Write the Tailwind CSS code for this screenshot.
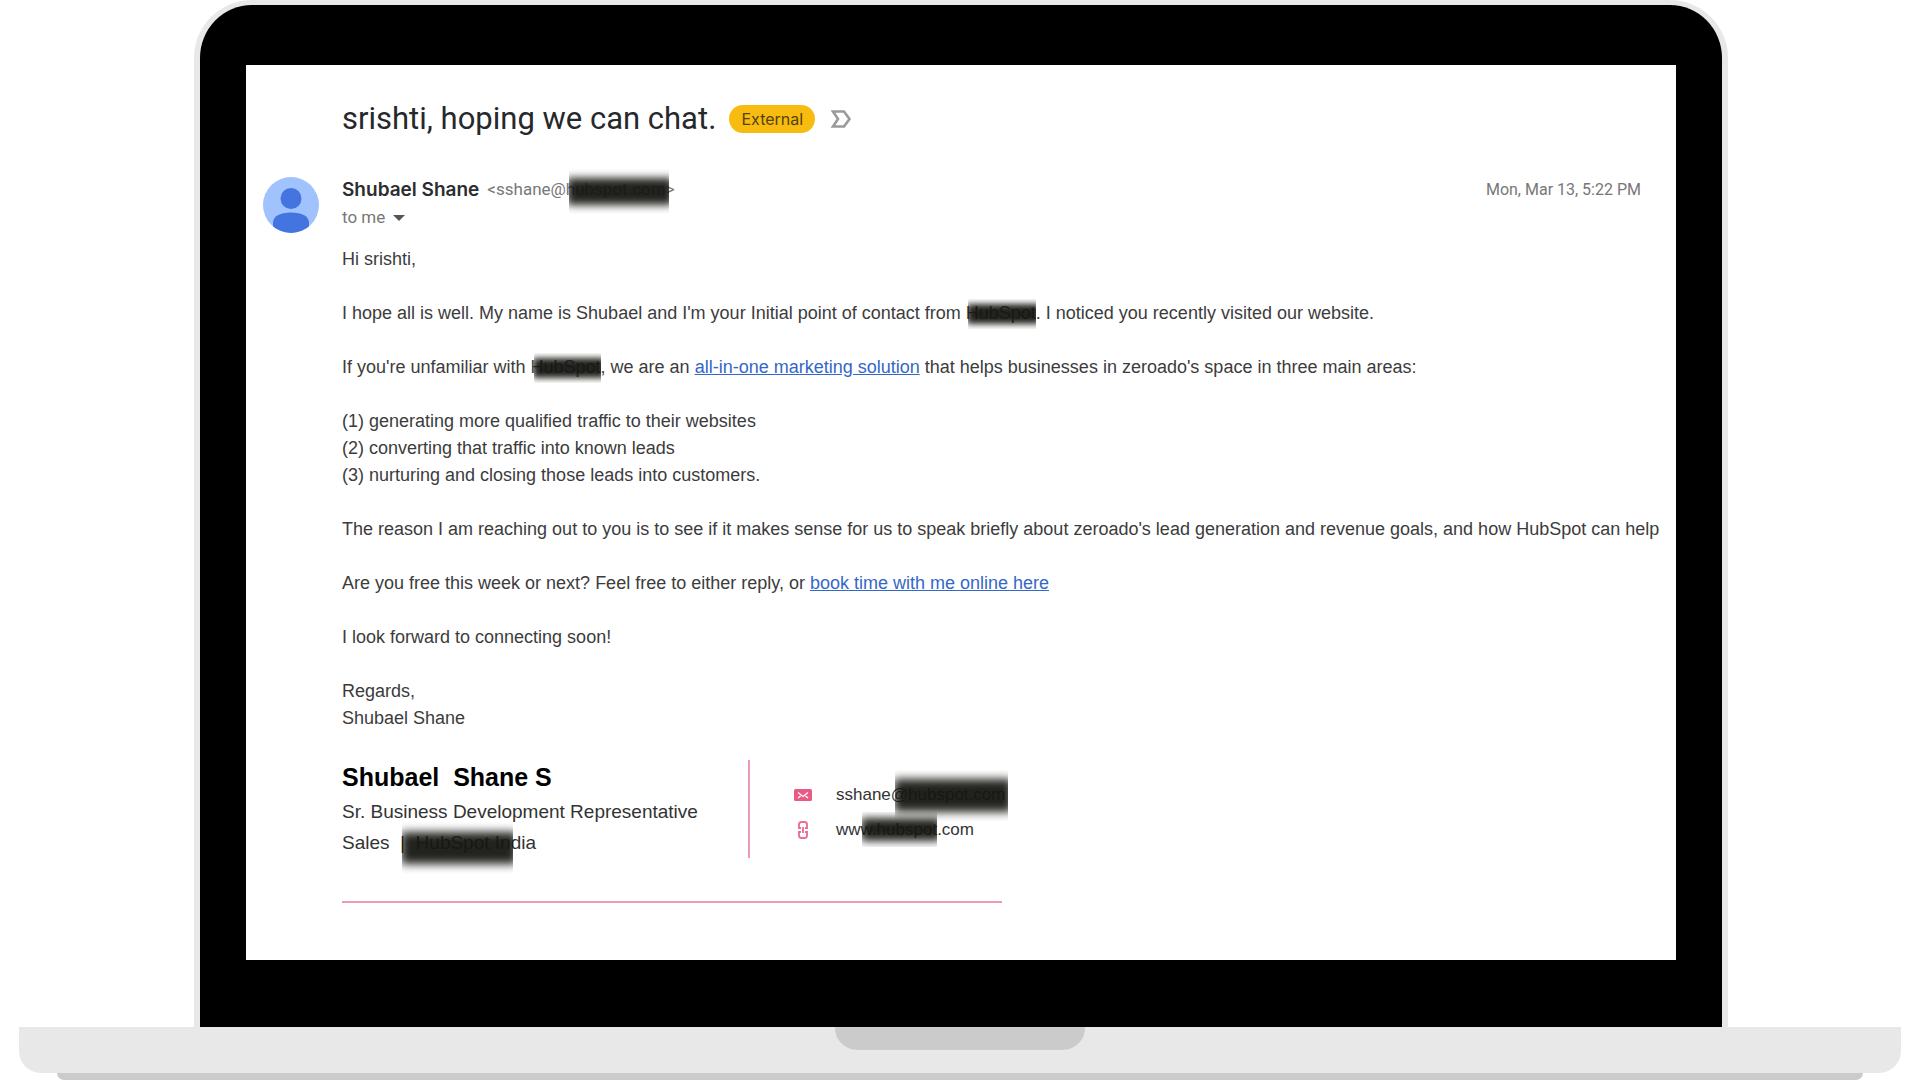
<!DOCTYPE html>
<html lang="en">
<head>
<meta charset="utf-8">
<meta name="viewport" content="width=device-width, initial-scale=1">
<title>srishti, hoping we can chat.</title>
<script src="https://cdn.jsdelivr.net/npm/@tailwindcss/browser@4"></script>
</head>
<body class="flex min-h-screen flex-col bg-white font-['Liberation_Sans',Arial,sans-serif] text-[#3c3c3c]">

<!-- Laptop lid -->
<div class="mr-[192px] ml-[194px] flex flex-1 flex-col rounded-t-[58px] border-x-6 border-t-5 border-[#e8e8e8] bg-black px-[46px] pt-[60px] pb-[67px]">
  <main class="flex-1 overflow-hidden bg-white pl-[17px] whitespace-nowrap">

    <!-- Subject -->
    <header class="flex items-center pt-[38px] pl-[79px] font-[Roboto,sans-serif]">
      <h1 class="text-[31px] leading-[32px] text-[#26282b]">srishti, hoping we can chat.</h1>
      <span class="ml-[13px] flex h-[28px] w-[86px] items-center justify-center rounded-full bg-[#f8bb0f] font-[Inter,sans-serif] text-[16px] text-[#54430f]">External</span>
      <button type="button" aria-label="Mark as important" class="ml-[15px]">
        <svg class="h-[18px] w-[22px]" viewBox="0 0 22 18" fill="none" stroke="#9a9a9a" stroke-width="2.6"><path d="M3 1.5H14L19.5 9L14 16.500H3L8 9Z"/></svg>
      </button>
    </header>

    <!-- Sender -->
    <section class="flex pt-[41px] font-[Roboto,sans-serif]">
      <svg class="mt-[1px] mr-[23px] h-[56px] w-[56px]" viewBox="0 0 56 56" role="img" aria-label="Shubael Shane">
        <clipPath id="disc"><circle cx="28" cy="28" r="28"/></clipPath>
        <g clip-path="url(#disc)"><path fill="#a0c3fd" d="M0 0h56v56H0z"/><circle cx="28" cy="21.500" r="10.500" fill="#4374e0"/><path fill="#4374e0" d="M10 56V46C10 39 17 35.500 28 35.500S46 39 46 46V56Z"/></g>
      </svg>
      <div class="flex-1">
        <div class="flex h-[28px] items-center pr-[35px]">
          <strong class="font-[Inter,sans-serif] text-[19px] font-semibold text-[#2b2d30]">Shubael Shane</strong>
          <span class="ml-[8px] text-[17px] text-[#777]">&lt;sshane@<span class="relative inline-block">hubspot.com<span class="absolute -top-[8px] -right-[3px] left-[3px] h-[45px] overflow-hidden"><span class="absolute -right-[4px] -left-[2px] inset-y-[9px] bg-[#161612]/95 blur-[4px]"></span></span></span>&gt;</span>
          <time class="ml-auto text-[16px] text-[#777]" datetime="2023-03-13T17:22">Mon, Mar 13, 5:22 PM</time>
        </div>
        <button type="button" class="flex h-[28px] items-center text-[17px] text-[#777]">to me
          <svg class="ml-[8px] h-[6px] w-[12px]" viewBox="0 0 12 6"><path fill="#555" d="M0 0h12L6 6Z"/></svg>
        </button>
      </div>
    </section>

    <!-- Message -->
    <section class="flex flex-col gap-[27px] pt-[13px] pl-[79px] text-[18px] leading-[27px]">
      <p>Hi srishti,</p>
      <p>I hope all is well. My name is Shubael and I'm your Initial point of contact from <span class="relative inline-block">HubSpot<span class="absolute -top-[1px] right-0 left-[2px] h-[30px] overflow-hidden"><span class="absolute -right-[4px] -left-[1px] inset-y-[5px] bg-[#161612]/95 blur-[3px]"></span></span></span>. I noticed you recently visited our website.</p>
      <p>If you're unfamiliar with <span class="relative inline-block">HubSpot<span class="absolute -top-[1px] right-0 left-[3px] h-[30px] overflow-hidden"><span class="absolute -right-[4px] -left-[1px] inset-y-[5px] bg-[#161612]/95 blur-[3px]"></span></span></span>, we are an <a href="#" class="text-[#3367c8] underline">all-in-one marketing solution</a> that helps businesses in zeroado's space in three main areas:</p>
      <p>(1) generating more qualified traffic to their websites<br>(2) converting that traffic into known leads<br>(3) nurturing and closing those leads into customers.</p>
      <p>The reason I am reaching out to you is to see if it makes sense for us to speak briefly about zeroado's lead generation and revenue goals, and how HubSpot can help</p>
      <p>Are you free this week or next? Feel free to either reply, or <a href="#" class="text-[#3367c8] underline">book time with me online here</a></p>
      <p>I look forward to connecting soon!</p>
      <p>Regards,<br>Shubael Shane</p>
    </section>

    <!-- Signature -->
    <footer class="ml-[79px] flex h-[171px] w-[660px] items-start border-b-2 border-[#ee9ab0] pt-[28px]">
      <div class="w-[406px] shrink-0 text-[19px] text-[#333]">
        <h2 class="text-[25px] leading-[35px] font-bold whitespace-pre text-black">Shubael  Shane S</h2>
        <p class="leading-[34px]">Sr. Business Development Representative</p>
        <p class="leading-[27px] whitespace-pre">Sales  <span class="relative inline-block">|  HubSpot In<span class="absolute -top-[7px] -right-[2px] left-[2px] h-[52px] overflow-hidden"><span class="absolute -right-[4px] -left-[1px] inset-y-[10px] bg-[#161612]/95 blur-[5px]"></span></span></span>dia</p>
      </div>
      <address class="flex h-[98px] flex-1 flex-col border-l-2 border-[#ee9ab0] pt-[17px] pl-[44px] text-[17px] leading-[35px] text-[#333] not-italic">
        <div class="flex items-center">
          <svg class="mr-[24px] h-[12px] w-[18px]" viewBox="0 0 18 12"><rect width="18" height="12" rx="1.500" fill="#e95b84"/><path d="M4 3.500L9 7.500L14 3.500M4 9L6.500 7M14 9L11.500 7" fill="none" stroke="#fff" stroke-width="1.300"/></svg>
          <span>sshane<span class="relative inline-block">@hubspot.com<span class="absolute -top-[7px] -right-[3px] left-[4px] h-[51px] overflow-hidden"><span class="absolute -right-[4px] -left-[1px] inset-y-[9px] bg-[#161612]/95 blur-[5px]"></span></span></span></span>
        </div>
        <div class="flex items-center">
          <svg class="mr-[24px] h-[18px] w-[18px]" viewBox="0 0 18 18" fill="none" stroke="#ec6f93" stroke-width="1.9"><path d="M7 7H5V3.500Q5 1 7.500 1H10.500Q13 1 13 3.500V7H11M7 11H5V14.500Q5 17 7.500 17H10.500Q13 17 13 14.500V11H11M9 6V12"/></svg>
          <span>ww<span class="relative inline-block">w.hubspot<span class="absolute top-[0px] right-0 left-[1px] h-[35px] overflow-hidden"><span class="absolute -right-[4px] -left-[1px] inset-y-[6px] bg-[#161612]/95 blur-[4px]"></span></span></span>.com</span>
        </div>
      </address>
    </footer>
  </main>
</div>

<!-- Laptop base -->
<div class="mx-[19px] h-[46px] rounded-b-[22px] bg-[#e8e8e8]">
  <div class="mx-auto h-[23px] w-[250px] rounded-b-[22px] bg-[#cbcbcb]"></div>
</div>
<div class="mx-[57px] h-[7px] rounded-b-[7px] bg-[#cbcbcb]"></div>
</body>
</html>
